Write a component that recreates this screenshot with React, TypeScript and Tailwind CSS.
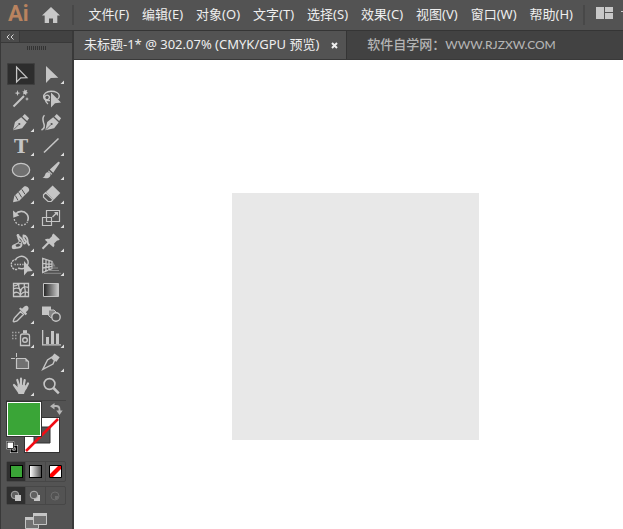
import type { ReactNode } from "react";

const menus = [
  "文件(F)",
  "编辑(E)",
  "对象(O)",
  "文字(T)",
  "选择(S)",
  "效果(C)",
  "视图(V)",
  "窗口(W)",
  "帮助(H)",
];

type Tool = {
  label: string;
  flyout?: boolean;
  active?: boolean;
  icon: ReactNode;
};

// Icons are drawn in a 30x24 cell, light grey on the panel colour.
const tools: Tool[] = [
  {
    label: "选择工具",
    active: true,
    icon: <path d="M10.6 5v15l4.2-4.2 6-.2z" fill="none" stroke="currentColor" strokeWidth="1.3" />,
  },
  {
    label: "直接选择工具",
    flyout: true,
    icon: <path d="M10 4v17l4.8-5 7.5-.2z" />,
  },
  {
    label: "魔棒工具",
    icon: (
      <>
        <path d="M7.5 20.5 18 10" stroke="currentColor" strokeWidth="2" />
        <path d="m11.5 4 .8 2.4 2.2.6-2.2.7-.8 2.3-.8-2.3-2.2-.7 2.2-.6zM18.5 3l.8 1.6 2-.6-.7 2 1.6.9-1.8.6-.3 2-1.3-1.5-1.9.6.7-1.8-1.3-1.4 1.9-.1zM21 11l.6 1.4 1.4.6-1.4.6L21 15l-.6-1.4L19 13l1.4-.6z" />
      </>
    ),
  },
  {
    label: "套索工具",
    icon: (
      <>
        <path
          d="M14 14.5c-3.5.4-6-1-6.3-3.3C7.3 7.8 10.5 5.3 15 5.2s8.2 2 8.3 4.8c0 1.3-.6 2.3-1.8 3.2M13.5 11.2c-.3-2-2.2-2.5-3.6-1.7-1.8 1-1.6 3.7.5 4.2 1.7.4 2.7-.7 3.1-2.5zM9.5 14c0 1.6.8 2.8 2.5 4"
          fill="none"
          stroke="currentColor"
          strokeWidth="1.4"
        />
        <path d="M15 6.5v15l4-4.3 6-.7z" />
      </>
    ),
  },
  {
    label: "钢笔工具",
    flyout: true,
    icon: (
      <>
        <path d="M7 20.3 9 12l6.2-4.7 5.5 5.3-4.6 5.7zM16.3 6.4 18.8 4l4.3 4.3-2 2.8z" />
        <path d="m7.5 19.8 5-5" stroke="#535353" strokeWidth=".8" />
        <circle cx="13.3" cy="14" r="1.1" fill="#535353" />
      </>
    ),
  },
  {
    label: "曲率工具",
    icon: (
      <>
        <path d="M9.3 20.3 11.2 12l6-4.7 5.5 5.3-4.6 5.7zM18.3 6.4 20.8 4l4.3 4.3-2 2.8z" />
        <path d="m9.8 19.8 5-5" stroke="#535353" strokeWidth=".8" />
        <circle cx="15.6" cy="14" r="1.1" fill="#535353" />
        <path d="M5.5 20c3.2-1.6 3.4-4 2.2-7C6.8 10 5.8 7.5 8.5 5.2" fill="none" stroke="currentColor" strokeWidth="1.5" />
      </>
    ),
  },
  {
    label: "文字工具",
    flyout: true,
    icon: (
      <text x="15" y="19" textAnchor="middle" className="font-['DejaVu_Serif',serif] text-[19px] font-bold">
        T
      </text>
    ),
  },
  {
    label: "直线段工具",
    flyout: true,
    icon: <path d="M8 18.5 22.5 4.5" stroke="currentColor" strokeWidth="1.6" />,
  },
  {
    label: "椭圆工具",
    flyout: true,
    icon: <ellipse cx="15" cy="12" rx="8.7" ry="6.7" fill="#717171" stroke="currentColor" strokeWidth="1.2" />,
  },
  {
    label: "画笔工具",
    flyout: true,
    icon: (
      <>
        <path d="M13.8 11.5 22 4c1-.8 2.2.2 1.5 1.5l-6.3 9.3zM12.8 12.5l3.5 3.5-.8.8-3.5-3.5z" />
        <path d="M6.500 19.500c2-.5 2.200-1.700 2.800-3.300.8-2.200 3.300-2.500 4.600-.9 1.300 1.700.5 3.900-1.700 4.600-1.900.6-4 .4-5.700-.4z" />
      </>
    ),
  },
  {
    label: "Shaper 工具",
    flyout: true,
    icon: (
      <>
        <path d="m7 20.3 1.3-6.3L18 4.5c2.2-1 6 1.5 5 4.5L13 19z" />
        <path d="m9.3 13.5 2.8 5M12.5 10.2l3.3 5.3M15.8 7.3l3.2 5" stroke="#535353" />
      </>
    ),
  },
  {
    label: "橡皮擦工具",
    flyout: true,
    icon: (
      <>
        <path d="M16.6 3.5 24.3 11l-6.5 6.7-7.9-7.6z" />
        <path d="m9.7 10.7 7.3 7-1.8 1.8H12l-4.5-4.3v-2.4z" fill="none" stroke="currentColor" strokeWidth="1.2" />
      </>
    ),
  },
  {
    label: "旋转工具",
    flyout: true,
    icon: (
      <>
        <path d="M9.5 8.2C12.5 4.5 18 4.5 20.8 8c1.6 2 1.8 4.6.8 7" fill="none" stroke="currentColor" strokeWidth="1.6" />
        <path d="m7 4.5.3 7.2 6-2.2z" />
        <path d="M8.3 13.2c.6 3.3 3.6 6 7.2 6 2.6 0 4.8-1.3 6-3.4" fill="none" stroke="currentColor" strokeWidth="1.3" strokeDasharray="1.7 1.5" />
      </>
    ),
  },
  {
    label: "比例缩放工具",
    flyout: true,
    icon: (
      <>
        <path d="M10.5 11.5v-7h13v11h-8M6.5 11.5h9v8h-9zM10.5 11.5v4h5" fill="none" stroke="currentColor" strokeWidth="1.2" />
        <path d="m16.5 11 4-4" stroke="currentColor" strokeWidth="1.4" />
        <path d="M18 6h4v4z" />
      </>
    ),
  },
  {
    label: "宽度工具",
    flyout: true,
    icon: (
      <>
        <path
          d="M8 17.5c4 .8 7.5 0 7.500-3 0-2.500-3.500-3.500-3.500-8.500 3.500 1.500 4.500 4 5.500 6.500.8 1.800 2.500 1 2.300-.8-.3-2.200-3.300-3-2.300-6.200 2.500 0 4.500 3 4.200 6.500 0 2 .5 2.500 1.800 3.500"
          fill="none"
          stroke="currentColor"
          strokeWidth="1.9"
        />
        <path d="m7 15.5 6-3" stroke="currentColor" strokeWidth="1.2" />
        <circle cx="12" cy="5.500" r="1.400" />
        <circle cx="8" cy="17" r="2.300" />
        <circle cx="14" cy="12.500" r="1.500" fill="#535353" stroke="currentColor" />
      </>
    ),
  },
  {
    label: "操控变形工具",
    flyout: true,
    icon: (
      <>
        <path d="m17.5 3.5 6.3 6.1-1.7 1-1-.2-3 3c.6 1.6.3 2.9-.8 3.9L8.8 9.7c1.2-1 2.8-1.3 4.3-.6l3-3-.1-1.100z" />
        <path d="m12.7 12.5-6.2 6.3" stroke="currentColor" strokeWidth="2" />
      </>
    ),
  },
  {
    label: "形状生成器工具",
    flyout: true,
    icon: (
      <>
        <path d="M10.5 5.500a5 5 0 1 0 1.500 9.700" fill="none" stroke="currentColor" strokeWidth="1.4" strokeDasharray="2 .8" />
        <path d="M9.5 5.500a6.800 6.200 0 1 1 2.700 8.500" fill="none" stroke="currentColor" strokeWidth="1.4" />
        <path d="M8.5 10.500h9" stroke="currentColor" strokeWidth="1.4" strokeDasharray="1.3 1.3" />
        <path d="M18 7v14.500l3.500-4 5.300-.4z" />
      </>
    ),
  },
  {
    label: "透视网格工具",
    flyout: true,
    icon: (
      <>
        <path d="M6.7 4.5v14l9.3-4v-7zM10 5.5V17M13 6.5v9M6.7 9.3l9.3.8M6.7 14l9.3-1.6" fill="none" stroke="currentColor" strokeWidth="1.3" />
        <path d="m17 8 2.5 4.5H17z" fill="#858585" />
        <path d="M15 14h7M12 16.5h11M8 19.3h17" stroke="#8b8b8b" />
      </>
    ),
  },
  {
    label: "网格工具",
    icon: (
      <path
        d="M7.5 5.5h15v13h-15zM13 5.5c-2 4 3.5 7.5 1 13M7.5 11c3.5-2 7-.5 8 2.5M7.5 15.500c2.500-2 5-1.500 6.500 1M22.500 9.500c-4-1.500-6.500 0-7.500 2.500M22.500 15c-3-2-6-1-7.500 1.500M18.500 5.500c-1.500 3 2.500 6 .5 13M7.500 8c2 0 4-.5 5-2"
        fill="none"
        stroke="currentColor"
        strokeWidth="1.3"
      />
    ),
  },
  {
    label: "渐变工具",
    icon: (
      <>
        <defs>
          <linearGradient id="toolGradient">
            <stop stopColor="#222" />
            <stop offset="1" stopColor="#ccc" />
          </linearGradient>
        </defs>
        <path d="M7.5 5.5h15v13h-15z" fill="url(#toolGradient)" stroke="currentColor" />
      </>
    ),
  },
  {
    label: "吸管工具",
    flyout: true,
    icon: (
      <>
        <path d="m14.5 9.5 3 3-6 6c-1 1-2.2.8-3.5 1.5l-.8-.8c.6-1.3.5-2.5 1.5-3.5z" fill="none" stroke="currentColor" strokeWidth="1.4" />
        <path d="m13 6.8 1.6-1.3L16 6.8l2.400-2.400c2.600-1.700 5.300 1 3.700 3.500l-2.300 2.400 1.300 1.500-1.400 1.500z" />
      </>
    ),
  },
  {
    label: "混合工具",
    icon: (
      <>
        <path d="M6 4.5h9V13H6z" />
        <path d="M12.5 8H18l2 2v5.5h-5.500l-2-2z" fill="#858585" stroke="currentColor" />
        <circle cx="20" cy="15" r="4.2" fill="#535353" stroke="currentColor" strokeWidth="1.4" />
      </>
    ),
  },
  {
    label: "符号喷枪工具",
    flyout: true,
    icon: (
      <>
        <path d="M17 4.2h4v3h-4z" />
        <path d="M14.5 10c0-1.500 1-2 2.500-2h4c1.500 0 2.500.5 2.500 2v9.500h-9z" fill="none" stroke="currentColor" strokeWidth="1.3" />
        <circle cx="19" cy="14" r="2.3" fill="none" stroke="currentColor" strokeWidth="1.4" />
        <path d="M6 6.5h8M6 9.5h6M6 12.5h5" stroke="#a0a0a0" strokeWidth="1.5" strokeDasharray="1.5 1.5" />
      </>
    ),
  },
  {
    label: "柱形图工具",
    flyout: true,
    icon: <path d="M6 4h1.3v14.3H25v1.2H6zM10 11h3v7h-3zM15 5h3v13h-3zM20 7.5h3V18h-3z" />,
  },
  {
    label: "画板工具",
    icon: (
      <>
        <path d="M10.5 8.5h9l3 3v7h-12z" fill="#717171" stroke="currentColor" strokeWidth="1.2" />
        <path d="M19.5 8.5v3h3z" />
        <path d="M10.5 3v4M5 8.5h4" stroke="currentColor" />
      </>
    ),
  },
  {
    label: "切片工具",
    flyout: true,
    icon: (
      <>
        <path d="M6.8 19.3 11.5 10l4-2.5 3 3L17 14z" fill="none" stroke="currentColor" strokeWidth="1.4" />
        <path d="m15.5 7 3-3.5 5.2 3.8-3.5 4.7z" />
      </>
    ),
  },
  {
    label: "抓手工具",
    flyout: true,
    icon: (
      <>
        <path
          d="m8 11 3.5 3.5M11.3 6l2 6.5M15 4.7V12M18.7 6l-1.2 6.5M22 9.5l-2.5 5"
          stroke="currentColor"
          strokeWidth="2.2"
          strokeLinecap="round"
        />
        <path d="M11.5 11h8l.8 3.500c-.8 2-1.800 3.500-2.300 5.500h-5.500c-.7-2.500-3-4.500-5-8 1.500-.6 2.700.3 4 1.800z" />
      </>
    ),
  },
  {
    label: "缩放工具",
    icon: (
      <>
        <circle cx="13.5" cy="10" r="5.4" fill="none" stroke="currentColor" strokeWidth="1.6" />
        <path d="m17.5 14 5.3 5.3" stroke="currentColor" strokeWidth="2.5" />
      </>
    ),
  },
];

function ToolButton({ tool }: { tool: Tool }) {
  return (
    <button type="button" aria-label={tool.label} className="flex h-6 items-center justify-center py-px">
      <span className={tool.active ? "rounded-xs bg-[#2d2d2d] ring-1 ring-[#404040] ring-inset" : ""}>
        <svg viewBox="1 1 28 22" className="block h-[22px] w-7 fill-current">
          {tool.icon}
          {tool.flyout && <path d="M28 18.5V22h-3.5z" fill="#dedede" />}
        </svg>
      </span>
    </button>
  );
}

function MenuBar() {
  return (
    <header className="flex h-[31px] shrink-0 items-center overflow-hidden border-b border-[#353535] bg-[#535353]">
      <span className="w-[35px] pb-0.5 pl-2 font-['Roboto',sans-serif] text-[22px] leading-6 font-bold text-[#b9835f]">
        Ai
      </span>
      <button type="button" aria-label="主页" className="ml-2 text-[#c8c8c8]">
        <svg viewBox="0 0 18 16" className="block h-4 w-[18px] fill-current">
          <path d="M9 0 0 8.5h2.700V16H7v-4.500h4V16h4.300V8.500H18z" />
        </svg>
      </button>
      <span className="ml-3 h-5 w-0.5 bg-[#484848]" />
      <nav className="ml-[15px] flex gap-[13px] whitespace-nowrap">
        {menus.map((menu) => (
          <button key={menu} type="button" className="pb-0.5 leading-5 text-[#eeeeee]">
            {menu}
          </button>
        ))}
      </nav>
      <span className="ml-2.5 h-5 w-0.5 shrink-0 bg-[#484848]" />
      <button type="button" aria-label="排列文档" className="ml-[11px] shrink-0 pb-1 text-[#c8c8c8]">
        <svg viewBox="0 0 27 12" className="block h-3 w-[27px] fill-current">
          <path d="M0 0h8v12H0zM9 0h8v5H9zM9 6h8v6H9zM25 4h2v1h-2z" />
        </svg>
      </button>
    </header>
  );
}

function ColorControls() {
  return (
    <div className="mx-1.5 mt-0.5 border-t border-[#444444]">
      <div className="relative h-[60px]">
        <button type="button" aria-label="描边" className="absolute top-4 left-[18px] border border-[#333333]">
          <svg viewBox="0 0 34 34" className="block size-[34px]">
            <path d="M0 0h34v34H0zM9 9v16h16V9z" fill="#fff" fillRule="evenodd" />
            <path d="M9 9h16v16H9z" fill="#535353" stroke="#333" />
            <path d="M1 33 33 1" stroke="#f00c14" strokeWidth="2.5" />
          </svg>
        </button>
        <button
          type="button"
          aria-label="填色"
          className="absolute top-0 left-0 size-9 border border-[#333333] bg-[#3aa537] ring-1 ring-white ring-inset"
        />
        <button type="button" aria-label="互换填色和描边" className="absolute top-0.5 left-11 text-[#b5b5b5]">
          <svg viewBox="0 0 13 12" className="block h-3 w-[13px] fill-current">
            <path d="M4 3h2c2.5 0 3.500 1 3.500 3.500V8" fill="none" stroke="currentColor" strokeWidth="1.8" />
            <path d="M0 3.2 4.500 0v6.500zM6.300 7.500h6.400L9.500 12z" />
          </svg>
        </button>
        <button type="button" aria-label="默认填色和描边" className="absolute top-10 left-0">
          <svg viewBox="0 0 12 12" className="block size-3">
            <path d="M5.5 5.5h5v5h-5z" fill="none" stroke="#fff" strokeWidth="3" />
            <path d="M5.5 5.5h5v5h-5z" fill="none" stroke="#000" strokeWidth="2" />
            <path d="M1 1h6.5v6.5H1z" fill="#fff" stroke="#000" />
            <path d="M.5 .5H8V8H.5z" fill="none" stroke="#ddd" strokeWidth=".5" />
          </svg>
        </button>
      </div>
      <div className="grid h-[21px] grid-cols-3 divide-x divide-[#484848] rounded-xs border border-[#474747]">
        <button type="button" aria-label="颜色" className="flex items-center justify-center bg-[#2f2f2f]">
          <span className="size-[13px] border border-black bg-[#3aa537]" />
        </button>
        <button type="button" aria-label="渐变" className="flex items-center justify-center">
          <span className="size-[13px] border border-black bg-linear-to-r from-white to-[#555555]" />
        </button>
        <button type="button" aria-label="无" className="flex items-center justify-center">
          <svg viewBox="0 0 13 13" className="block size-[13px]">
            <path d="M.5 .5h12v12H.5z" fill="#fff" stroke="#000" />
            <path d="M1 9v3h3l8-8V1H9z" fill="#f00" />
          </svg>
        </button>
      </div>
      <div className="mt-1 grid h-[19px] grid-cols-3 divide-x divide-[#484848] rounded-xs border border-[#474747]">
        <button type="button" aria-label="正常绘图" className="flex items-center justify-center bg-[#2f2f2f]">
          <svg viewBox="0 0 12 12" className="block size-3">
            <circle cx="5" cy="5" r="3.8" fill="#606060" stroke="#a8a8a8" />
            <path d="M5 5h6v6H5z" fill="#c5c5c5" />
          </svg>
        </button>
        <button type="button" aria-label="背面绘图" className="flex items-center justify-center">
          <svg viewBox="0 0 12 12" className="block size-3">
            <path d="M5 5h6v6H5z" fill="#c5c5c5" />
            <circle cx="5" cy="5" r="3.8" fill="#606060" stroke="#b5b5b5" />
          </svg>
        </button>
        <button type="button" aria-label="内部绘图" disabled className="flex items-center justify-center">
          <svg viewBox="0 0 12 12" className="block size-3">
            <circle cx="6" cy="6" r="4" fill="none" stroke="#6c6c6c" />
            <path d="M6 6h3.5A3.5 3.5 0 0 1 6 9.500z" fill="#6c6c6c" />
          </svg>
        </button>
      </div>
      <button type="button" aria-label="更改屏幕模式" className="mt-2 ml-[19px] block">
        <svg viewBox="0 0 22 16" className="block h-4 w-[22px]">
          <path d="M.5 4.5h13v11H.5z" fill="#717171" stroke="#c5c5c5" />
          <path d="M0 4h14v3H0z" fill="#c5c5c5" />
          <path d="M8.5 .5h13v11h-13z" fill="#717171" stroke="#c5c5c5" />
          <path d="M8 0h14v3H8z" fill="#c5c5c5" />
        </svg>
      </button>
    </div>
  );
}

function ToolPanel() {
  return (
    <aside className="flex w-[74px] shrink-0 flex-col border-r-2 border-l border-[#393939] bg-[#535353] text-[#c5c5c5]">
      <div className="flex h-3 shrink-0 border-b border-[#393939] bg-[#424242]">
        <button type="button" aria-label="折叠面板" className="flex w-[19px] items-center justify-center border-r border-[#393939] bg-[#4b4b4b]">
          <svg viewBox="0 0 8 6" className="block h-1.5 w-2 fill-none stroke-[#d5d5d5]">
            <path d="M3.5 .5 1 3l2.500 2.500M7.500 .5 5 3l2.500 2.500" />
          </svg>
        </button>
      </div>
      <div className="-ml-px flex h-[19px] shrink-0 justify-center pt-[3px]">
        <svg viewBox="0 0 19 4" className="block h-1 w-[19px]">
          <path d="M0 2h19" stroke="#333" strokeWidth="4" strokeDasharray="1 1" />
        </svg>
      </div>
      <div className="-ml-px">
        <div className="ml-1.5 grid w-[60px] grid-cols-2">
          {tools.map((tool) => (
            <ToolButton key={tool.label} tool={tool} />
          ))}
        </div>
        <ColorControls />
      </div>
    </aside>
  );
}

export default function App() {
  return (
    <div className="flex h-screen flex-col overflow-hidden bg-[#535353] font-['Noto_Sans','Noto_Sans_CJK_SC',sans-serif] text-[13px]">
      <MenuBar />
      <div className="flex min-h-0 flex-1">
        <ToolPanel />
        <main className="flex min-w-0 flex-1 flex-col">
          <div className="flex h-[29px] shrink-0 items-stretch border-b border-[#393939] bg-[#424242] whitespace-nowrap">
            <div className="flex items-center gap-3 border-r border-[#353535] bg-[#535353] pr-2 pl-2.5 text-[#eeeeee]">
              <span>未标题-1* @ 302.07% (CMYK/GPU 预览)</span>
              <button type="button" aria-label="关闭">
                <svg viewBox="0 0 7 7" className="block size-[7px] stroke-[#eeeeee] stroke-2">
                  <path d="m1 1 5 5M6 1 1 6" />
                </svg>
              </button>
            </div>
            <a href="#" className="flex items-center pl-5 font-['Lato','Noto_Sans_CJK_SC',sans-serif] font-medium text-[#b4b4b4]">
              软件自学网：<span className="text-xs">WWW.RJZXW.COM</span>
            </a>
          </div>
          <div className="flex-1 bg-white pt-[133px] pl-[158px]">
            <div className="size-[247px] bg-[#e8e8e8]" />
          </div>
        </main>
      </div>
    </div>
  );
}
